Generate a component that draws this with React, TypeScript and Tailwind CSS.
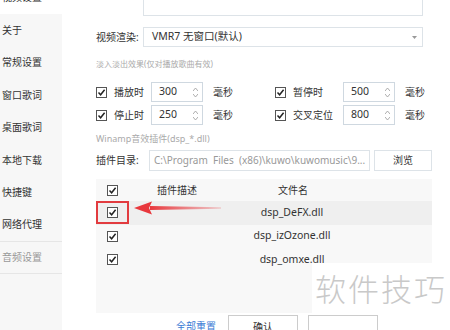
import React from "react";

const FONT = { fontFamily: "'Noto Sans', 'Noto Sans CJK SC', sans-serif" };

const NAV = ["关于", "常规设置", "窗口歌词", "桌面歌词", "本地下载", "快捷键", "网络代理"];

const FILES = ["dsp_DeFX.dll", "dsp_izOzone.dll", "dsp_omxe.dll"];

function Check() {
  return (
    <span className="flex h-[11px] w-[11px] items-center justify-center border border-[#555] bg-white">
      <svg width="9" height="9" viewBox="0 0 9 9">
        <path d="M1.5 4.6 L3.6 6.8 L7.6 1.8" fill="none" stroke="#222" strokeWidth="1.5" />
      </svg>
    </span>
  );
}

function Spin({ value }: { value: string }) {
  return (
    <div className="flex h-[20px] w-[52px] items-center justify-between border border-[#cfd8e0] bg-white pl-[7px] pr-[4px] text-[10.5px] text-[#333]">
      <span>{value}</span>
      <span className="flex flex-col items-center gap-[3px]">
        <svg width="5" height="3" viewBox="0 0 5 3"><path d="M0 3 L2.5 0 L5 3" fill="none" stroke="#999" strokeWidth="0.8" /></svg>
        <svg width="5" height="3" viewBox="0 0 5 3"><path d="M0 0 L2.5 3 L5 0" fill="none" stroke="#999" strokeWidth="0.8" /></svg>
      </span>
    </div>
  );
}

function Timing({ label, value, labelW }: { label: string; value: string; labelW: string }) {
  return (
    <div className="flex items-center">
      <Check />
      <span className={`ml-[7px] text-[10px] text-[#333] ${labelW}`}>{label}</span>
      <Spin value={value} />
      <span className="ml-[10px] text-[10px] text-[#333]">毫秒</span>
    </div>
  );
}

export default function App() {
  return (
    <div className="relative flex h-[330px] w-[450px] overflow-hidden bg-white" style={FONT}>
      {/* sidebar */}
      <div className="flex w-[62px] shrink-0 flex-col">
        <div className="-mt-[8px] h-[22px] shrink-0 bg-white pl-[2px] text-[10px] leading-[10px] text-[#333]">视频设置</div>
        <div className="flex flex-1 flex-col bg-[#f7f7f7]">
          {NAV.map((n, i) => (
            <div
              key={n}
              className={`flex h-[32.5px] shrink-0 items-center pl-[2px] text-[10px] text-[#333] ${i === NAV.length - 1 ? "border-b border-[#e6e6e6]" : ""}`}
            >
              {n}
            </div>
          ))}
          <div className="flex h-[32px] shrink-0 items-center border-b border-[#e6e6e6] pl-[2px] text-[10px] text-[#999]">音频设置</div>
        </div>
      </div>

      {/* main */}
      <div className="flex flex-1 flex-col pl-[34px]">
        <div className="-mt-[4px] ml-[47px] h-[20px] w-[280px] shrink-0 border border-[#dde3e8] bg-white" />

        <div className="mt-[11px] flex shrink-0 items-center">
          <span className="w-[47px] text-[10px] text-[#333]">视频渲染:</span>
          <div className="flex h-[20px] w-[280px] items-center justify-between border border-[#dde3e8] pl-[8px] pr-[5px] text-[10.5px] text-[#333]">
            <span>VMR7 无窗口(默认)</span>
            <svg width="5" height="3" viewBox="0 0 5 3"><path d="M0 0 L5 0 L2.5 3 Z" fill="#999" /></svg>
          </div>
        </div>

        <div className="mt-[11px] shrink-0 text-[8px] leading-[12px] text-[#aaa]">淡入淡出效果(仅对播放歌曲有效)</div>

        <div className="mt-[12px] flex shrink-0 flex-col gap-[3px]">
          <div className="flex items-center">
            <div className="w-[179px]"><Timing label="播放时" value="300" labelW="w-[37px]" /></div>
            <Timing label="暂停时" value="500" labelW="w-[50px]" />
          </div>
          <div className="flex items-center">
            <div className="w-[179px]"><Timing label="停止时" value="250" labelW="w-[37px]" /></div>
            <Timing label="交叉定位" value="800" labelW="w-[50px]" />
          </div>
        </div>

        <div className="mt-[8px] shrink-0 text-[9px] leading-[12px] text-[#aaa]">Winamp音效插件(dsp_*.dll)</div>

        <div className="mt-[5px] flex shrink-0 items-center">
          <span className="w-[53px] text-[10px] text-[#333]">插件目录:</span>
          <div className="flex h-[21px] w-[221px] items-center border border-[#dde3e8] pl-[4px] text-[10px] text-[#999]">
            C:\Program&nbsp; Files&nbsp; (x86)\kuwo\kuwomusic\9...
          </div>
          <button className="ml-[4px] h-[21px] w-[58px] border border-[#dde3e8] bg-white text-[10px] text-[#333]">浏览</button>
        </div>

        <div className="mt-[8px] flex h-[134px] w-[336px] shrink-0 flex-col bg-[#f8f8f8]">
          <div className="flex h-[22px] items-center">
            <div className="flex w-[33px] justify-center"><Check /></div>
            <span className="ml-[28px] w-[80px] text-[10px] text-[#333]">插件描述</span>
            <span className="ml-[41px] text-[10px] text-[#333]">文件名</span>
          </div>
          {FILES.map((f, i) => (
            <div key={f} className={`flex h-[23.5px] items-center ${i === 0 ? "bg-[#efefef]" : ""}`}>
              <div className={`flex h-[23px] w-[33px] items-center justify-center ${i === 0 ? "border-2 border-[#e23b3f]" : ""}`}>
                <Check />
              </div>
              <span className="ml-[106px] w-[114px] text-center text-[10.5px] text-[#333]">{f}</span>
            </div>
          ))}
        </div>

        <div className="mt-[2px] flex shrink-0 items-start">
          <span className="ml-[80px] mt-[4px] text-[10px] text-[#3a7bd5]">全部重置</span>
          <button className="ml-[12px] h-[24px] w-[70px] border border-[#ccc] bg-white text-[10px] text-[#333]">确认</button>
          <button className="ml-[10px] h-[24px] w-[70px] border border-[#ccc] bg-white" />
        </div>
      </div>

      {/* red pointer arrow */}
      <svg className="absolute left-[133px] top-[200px]" width="90" height="16" viewBox="0 0 90 16">
        <defs>
          <linearGradient id="tail" x1="0" x2="1" y1="0" y2="0">
            <stop offset="0" stopColor="#e8383d" />
            <stop offset="1" stopColor="#e8383d" stopOpacity="0.2" />
          </linearGradient>
        </defs>
        <polygon points="17,6 88,7.3 88,8.7 17,10" fill="url(#tail)" />
        <polygon points="1,8 19,1.5 16,8 19,14.5" fill="#e8383d" />
      </svg>

      {/* watermark */}
      <div className="absolute left-[312px] top-[263px] flex h-[50px] w-[138px] items-center justify-center bg-white">
        <span className="text-[31px] tracking-[2px] text-[#c9c9c9]" style={{ fontFamily: "'Noto Sans CJK SC', sans-serif", fontWeight: 300 }}>软件技巧</span>
      </div>
    </div>
  );
}
